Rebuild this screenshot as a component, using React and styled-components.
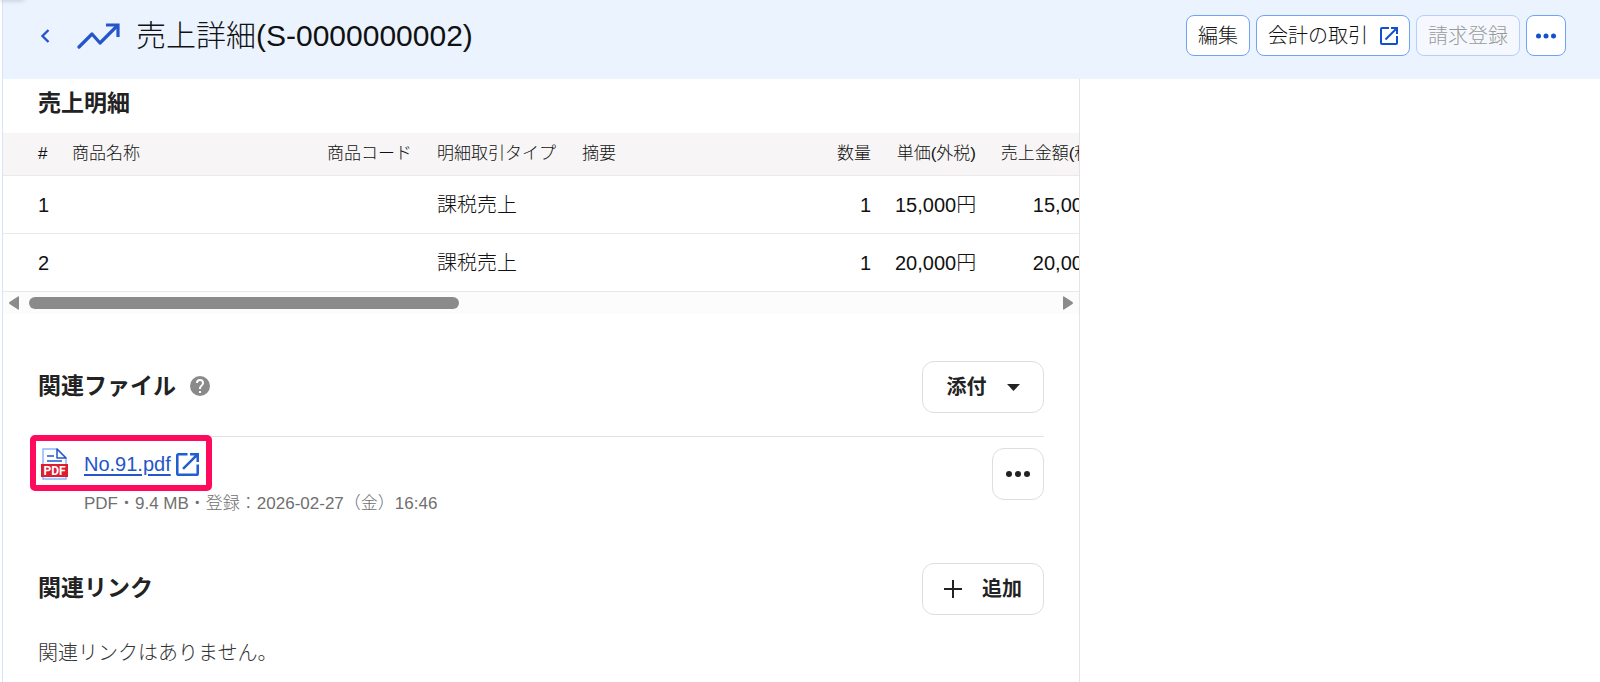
import React, { useRef } from 'react'
import styled, { createGlobalStyle } from 'styled-components'

const GlobalStyle = createGlobalStyle`
  * {
    box-sizing: border-box;
  }
  body {
    margin: 0;
    background: #fff;
    color: #111;
    font-family: 'Liberation Sans', 'Noto Sans CJK JP', sans-serif;
    font-size: 20px;
    line-height: 28px;
  }
`

const Page = styled.div`
  display: flex;
  flex-direction: column;
  height: 100vh;
  margin-left: 2px;
  border-left: 1px solid #d6e4ff;
  overflow: hidden;

  /* shadow of the tab above the page */
  &::before {
    content: '';
    position: absolute;
    top: -2px;
    left: 0;
    width: 24px;
    height: 2px;
    box-shadow: 0 0 5px rgba(0, 0, 0, 0.35);
  }
`

const Header = styled.header`
  display: flex;
  align-items: center;
  justify-content: space-between;
  flex: none;
  height: 79px;
  padding: 0 34px 8px;
  background: #ebf3ff;
`

const TitleGroup = styled.div`
  display: flex;
  align-items: center;
`

const BackLink = styled.a`
  display: flex;
  width: 40px;
`

const TrendIcon = styled.svg`
  width: 44px;
  height: 30px;
  margin-right: 15px;
`

const Title = styled.h1`
  margin: 0;
  font-size: 30px;
  font-weight: 300;
  line-height: 40px;
`

const Actions = styled.div`
  display: flex;
  gap: 6px;
`

const HeaderButton = styled.button`
  display: flex;
  align-items: center;
  justify-content: center;
  gap: 12px;
  height: 41px;
  padding: 0 ${({ $icon }) => ($icon ? 9 : 11)}px;
  border: 1px solid #6fa3f7;
  border-radius: 8px;
  background: #fff;
  color: ${({ $icon }) => ($icon ? '#1450cc' : '#111')};
  font: inherit;
  font-weight: 300;

  &:disabled {
    border-color: #b5cffb;
    background: #f5f9ff;
    color: #999;
  }
`

const Body = styled.div`
  display: grid;
  grid-template-columns: minmax(0, 1077fr) minmax(0, 520fr);
  flex: 1;
  min-height: 0;
`

const Main = styled.main`
  border-right: 1px solid #e4e4e4;
`

const Heading = styled.h2`
  display: flex;
  align-items: center;
  gap: 14px;
  margin: 0;
  padding-bottom: 2px;
  font-size: 23px;
  font-weight: 600;
  line-height: 32px;
  color: #222;
`

const TableHeading = styled(Heading)`
  padding: 8px 35px 14px;
`

const TableScroll = styled.div`
  overflow: hidden;
`

const Table = styled.table`
  width: 2590px;
  table-layout: fixed;
  border-collapse: separate;
  border-spacing: 0;
`

const HeadCell = styled.th`
  height: 43px;
  padding: 0 12px;
  border-bottom: 1px solid #ebe9e9;
  background: #f7f5f5;
  font-size: 17px;
  font-weight: 300;
  line-height: 24px;
  text-align: ${({ $right }) => ($right ? 'right' : 'left')};
  white-space: nowrap;

  &:first-child {
    padding-left: 35px;
  }
`

const Cell = styled.td`
  height: 58px;
  padding: 0 12px;
  border-bottom: 1px solid #e9e9e9;
  font-weight: 300;
  text-align: ${({ $right }) => ($right ? 'right' : 'left')};
  white-space: nowrap;

  &:first-child {
    padding-left: 35px;
  }
`

const Scrollbar = styled.div`
  display: flex;
  align-items: center;
  gap: 10px;
  height: 22px;
  padding: 0 6px;
  background: #fcfcfc;
`

const ScrollArrow = styled.button`
  display: flex;
  padding: 0;
  border: none;
  background: none;
  color: #8b8b8b;
`

const Track = styled.div`
  flex: 1;
`

const Thumb = styled.div`
  width: 42%;
  height: 12px;
  border-radius: 6px;
  background: #8b8b8b;
`

const Section = styled.section`
  padding: 0 35px;
  margin-top: ${({ $gap }) => $gap}px;
`

const SectionHead = styled.div`
  display: flex;
  align-items: center;
  justify-content: space-between;
`

const OutlineButton = styled.button`
  display: flex;
  align-items: center;
  justify-content: center;
  gap: 20px;
  width: ${({ $square }) => ($square ? '52px' : '122px')};
  height: 52px;
  padding: 0;
  border: 1px solid #dedede;
  border-radius: 12px;
  background: #fff;
  color: #222;
  font: inherit;
  font-weight: 600;
`

const FileRow = styled.div`
  display: flex;
  align-items: flex-start;
  justify-content: space-between;
  height: 76px;
  margin-top: 23px;
  padding-top: 11px;
  border-top: 1px solid #e2e2e2;
`

const FileInfo = styled.div`
  display: grid;
  grid-template-columns: 46px auto;
  align-items: center;
  position: relative;

  > svg {
    margin-left: 3px;
  }
`

const FileLink = styled.a`
  display: flex;
  align-items: center;
  gap: 5px;
  height: 32px;
  color: #2456c9;
  text-underline-offset: 3px;
`

const Meta = styled.p`
  grid-column: 2;
  margin: 12px 0 0;
  color: #707070;
  font-size: 17px;
  font-weight: 300;
  line-height: 24px;
`

// frame laid over the file icon and its link
const Highlight = styled.div`
  position: absolute;
  top: -13px;
  left: -8px;
  width: 182px;
  height: 56px;
  border: 6px solid #ff0a5c;
  border-radius: 5px;
  pointer-events: none;
`

const Empty = styled.p`
  margin: 24px 0 0;
  color: #333;
  font-weight: 300;
`

const columns = [
  { label: '#', width: 57 },
  { label: '商品名称', width: 255 },
  { label: '商品コード', width: 110 },
  { label: '明細取引タイプ', width: 145 },
  { label: '摘要', width: 231 },
  { label: '数量', width: 82, right: true },
  { label: '単価(外税)', width: 105, right: true },
  { label: '売上金額(税込)', width: 138, right: true },
  { label: '' },
]

const rows = [
  ['1', '', '', '課税売上', '', '1', '15,000円', '15,000円', ''],
  ['2', '', '', '課税売上', '', '1', '20,000円', '20,000円', ''],
]

const ExternalIcon = ({ size, color }) => (
  <svg width={size} height={size} viewBox='3 3 18 18' fill={color}>
    <path d='M19 19H5V5h7V3H5a2 2 0 0 0-2 2v14a2 2 0 0 0 2 2h14a2 2 0 0 0 2-2v-7h-2v7zM14 3v2h3.6l-9.8 9.8 1.4 1.4L19 6.4V10h2V3h-7z' />
  </svg>
)

const DotsIcon = ({ width }) => (
  <svg width={width} height='8' viewBox='0 0 24 8' fill='currentColor'>
    <circle cx='3' cy='4' r='3' />
    <circle cx='12' cy='4' r='3' />
    <circle cx='21' cy='4' r='3' />
  </svg>
)

const HelpIcon = () => (
  <svg width='20' height='20' viewBox='2 2 20 20' fill='#8a8a8a'>
    <path d='M12 2a10 10 0 1 0 0 20 10 10 0 0 0 0-20zm1 17h-2v-2h2v2zm2.07-7.75-.9.92C13.45 12.9 13 13.5 13 15h-2v-.5c0-1.1.45-2.1 1.17-2.83l1.24-1.26c.37-.36.59-.86.59-1.41a2 2 0 1 0-4 0H8a4 4 0 1 1 8 0c0 .88-.36 1.68-.93 2.25z' />
  </svg>
)

const PdfIcon = () => (
  <svg width='27' height='32' viewBox='0 0 27 32'>
    <path d='M2 1h14l9 9v21H2z' fill='#fff' stroke='#8fb4ff' strokeWidth='1.5' />
    <path d='M16 1v9h9z' fill='#fff' stroke='#2456c9' strokeWidth='1.5' strokeLinejoin='round' />
    <path d='M6 8h7M6 13h15' stroke='#2456c9' strokeWidth='1.5' />
    <rect y='16' width='27' height='13' fill='#dc1e32' />
    <text
      x='13.5'
      y='27'
      fill='#fff'
      fontFamily='Liberation Sans Narrow, Roboto, sans-serif'
      fontSize='12'
      fontWeight='700'
      textAnchor='middle'
    >
      PDF
    </text>
  </svg>
)

const App = () => {
  const tableRef = useRef(null)
  const scroll = (left) => tableRef.current.scrollBy({ left })

  return (
    <>
      <GlobalStyle />
      <Page>
        <Header>
          <TitleGroup>
            <BackLink href='#' aria-label='戻る'>
              <svg width='16' height='16' viewBox='0 0 16 16' fill='none' stroke='#2456c9' strokeWidth='2.4'>
                <path d='M11.5 2l-6 6 6 6' />
              </svg>
            </BackLink>
            <TrendIcon viewBox='0 0 44 30' fill='none' stroke='#2456c9' strokeWidth='3.2'>
              <path d='M2 26 15 13l8 9L40 5' strokeLinecap='round' strokeLinejoin='round' />
              <path d='M29 4h12v12' />
            </TrendIcon>
            <Title>売上詳細(S-0000000002)</Title>
          </TitleGroup>
          <Actions>
            <HeaderButton>編集</HeaderButton>
            <HeaderButton>
              会計の取引
              <ExternalIcon size={18} color='#1450cc' />
            </HeaderButton>
            <HeaderButton disabled>請求登録</HeaderButton>
            <HeaderButton $icon aria-label='その他'>
              <DotsIcon width={20} />
            </HeaderButton>
          </Actions>
        </Header>
        <Body>
          <Main>
            <TableHeading>売上明細</TableHeading>
            <TableScroll ref={tableRef}>
              <Table>
                <colgroup>
                  {columns.map(({ label, width }) => (
                    <col key={label} width={width} />
                  ))}
                </colgroup>
                <thead>
                  <tr>
                    {columns.map(({ label, right }) => (
                      <HeadCell key={label} $right={right}>
                        {label}
                      </HeadCell>
                    ))}
                  </tr>
                </thead>
                <tbody>
                  {rows.map((row) => (
                    <tr key={row[0]}>
                      {row.map((value, i) => (
                        <Cell key={i} $right={columns[i].right}>
                          {value}
                        </Cell>
                      ))}
                    </tr>
                  ))}
                </tbody>
              </Table>
            </TableScroll>
            <Scrollbar>
              <ScrollArrow aria-label='左へ' onClick={() => scroll(-200)}>
                <svg width='10' height='14' viewBox='0 0 10 14' fill='currentColor'>
                  <path d='M10 1v12q0 1-1 .5L.5 8q-.8-1 0-2L9 .5q1-.5 1 .5z' />
                </svg>
              </ScrollArrow>
              <Track>
                <Thumb />
              </Track>
              <ScrollArrow aria-label='右へ' onClick={() => scroll(200)}>
                <svg width='10' height='14' viewBox='0 0 10 14' fill='currentColor'>
                  <path d='M0 1v12q0 1 1 .5L9.5 8q.8-1 0-2L1 .5Q0 0 0 1z' />
                </svg>
              </ScrollArrow>
            </Scrollbar>
            <Section $gap={47}>
              <SectionHead>
                <Heading>
                  関連ファイル
                  <HelpIcon />
                </Heading>
                <OutlineButton>
                  添付
                  <svg width='13' height='7' viewBox='0 0 13 7' fill='#222'>
                    <path d='M0 0h13L6.5 7z' />
                  </svg>
                </OutlineButton>
              </SectionHead>
              <FileRow>
                <FileInfo>
                  <PdfIcon />
                  <FileLink href='#'>
                    No.91.pdf
                    <ExternalIcon size={23} color='#1f5fd0' />
                  </FileLink>
                  <Meta>PDF・9.4 MB・登録：2026-02-27（金）16:46</Meta>
                  <Highlight />
                </FileInfo>
                <OutlineButton $square aria-label='ファイルの操作'>
                  <DotsIcon width={24} />
                </OutlineButton>
              </FileRow>
            </Section>
            <Section $gap={51}>
              <SectionHead>
                <Heading>関連リンク</Heading>
                <OutlineButton>
                  <svg width='18' height='18' viewBox='0 0 18 18' stroke='#222' strokeWidth='2'>
                    <path d='M9 0v18M0 9h18' />
                  </svg>
                  追加
                </OutlineButton>
              </SectionHead>
              <Empty>関連リンクはありません。</Empty>
            </Section>
          </Main>
        </Body>
      </Page>
    </>
  )
}

export default App
